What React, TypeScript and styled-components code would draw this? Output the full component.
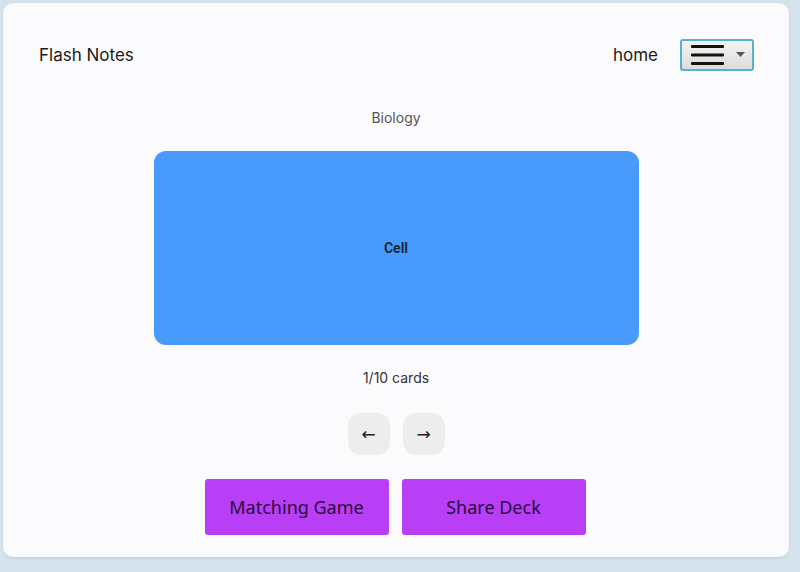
import React, { useState } from "react";
import styled, { createGlobalStyle } from "styled-components";

const GlobalStyle = createGlobalStyle`
  html, body {
    margin: 0;
    padding: 0;
    background: #d5e3ee;
  }
  body {
    font-family: Inter, "Liberation Sans", sans-serif;
  }
`;

const Page = styled.div`
  padding: 3px 11px 15px 3px;
  height: 572px;
  box-sizing: border-box;
`;

const Card = styled.main`
  width: 786px;
  height: 554px;
  box-sizing: border-box;
  background: #fbfafd;
  border-radius: 10px;
  box-shadow: 0 1px 3px rgba(60, 80, 110, 0.15);
  display: flex;
  flex-direction: column;
  align-items: center;
`;

const Header = styled.header`
  width: 100%;
  box-sizing: border-box;
  display: flex;
  align-items: center;
  justify-content: space-between;
  padding: 34px 35px 0 36px;
  height: 69px;
`;

const Brand = styled.div`
  font-size: 17px;
  color: #1a1a1a;
`;

const Nav = styled.nav`
  display: flex;
  align-items: center;
  gap: 22px;
`;

const NavLink = styled.a`
  font-size: 17px;
  color: #1a1a1a;
  text-decoration: none;
`;

const MenuSelect = styled.button`
  width: 74px;
  height: 32px;
  box-sizing: border-box;
  border: 2px solid #5aaed0;
  border-radius: 3px;
  background: linear-gradient(#f3f3f3, #dcdcdc);
  display: flex;
  align-items: center;
  justify-content: center;
  gap: 10px;
  padding: 0;
  cursor: pointer;
`;

const Subject = styled.div`
  margin-top: 37px;
  font-size: 14px;
  color: #555;
`;

const FlashCard = styled.div`
  margin-top: 25px;
  width: 485px;
  height: 194px;
  border-radius: 12px;
  background: #489bfc;
  display: flex;
  align-items: center;
  justify-content: center;
  font-family: Roboto, "Liberation Sans", sans-serif;
  font-weight: 700;
  font-size: 14px;
  color: #1b2a3c;
  cursor: pointer;
`;

const Counter = styled.div`
  margin-top: 24px;
  font-size: 14px;
  color: #333;
`;

const ArrowRow = styled.div`
  margin-top: 27px;
  display: flex;
  gap: 13px;
`;

const ArrowButton = styled.button`
  width: 42px;
  height: 42px;
  border: none;
  border-radius: 13px;
  background: #eeeded;
  font-size: 17px;
  color: #222;
  display: flex;
  align-items: center;
  justify-content: center;
  cursor: pointer;
  font-family: "DejaVu Sans", sans-serif;
`;

const ActionRow = styled.div`
  margin-top: 24px;
  display: flex;
  gap: 13px;
  margin-right: 2px;
`;

const ActionButton = styled.button`
  width: 184px;
  height: 56px;
  border: none;
  border-radius: 3px;
  background: #b83ff6;
  color: #2b0a3c;
  font-family: "Noto Sans", "Open Sans", sans-serif;
  font-size: 18px;
  cursor: pointer;
`;

const HamburgerIcon = () => (
  <svg width="36" height="22" viewBox="0 0 36 22">
    <rect x="1" y="1" width="33" height="3" rx="1" fill="#111" />
    <rect x="1" y="9.5" width="33" height="3" rx="1" fill="#111" />
    <rect x="1" y="18" width="33" height="3" rx="1" fill="#111" />
  </svg>
);

const Caret = () => (
  <svg width="9" height="5" viewBox="0 0 9 5">
    <path d="M0 0 L9 0 L4.5 5 Z" fill="#555" />
  </svg>
);

const cards = ["Cell", "Nucleus", "Mitochondria", "Ribosome", "Membrane", "Cytoplasm", "Chloroplast", "Enzyme", "DNA", "Protein"];

const App: React.FC = () => {
  const [index, setIndex] = useState(0);

  return (
    <>
      <GlobalStyle />
      <Page>
        <Card>
          <Header>
            <Brand>Flash Notes</Brand>
            <Nav>
              <NavLink href="#">home</NavLink>
              <MenuSelect aria-label="menu">
                <HamburgerIcon />
                <Caret />
              </MenuSelect>
            </Nav>
          </Header>
          <Subject>Biology</Subject>
          <FlashCard>{cards[index]}</FlashCard>
          <Counter>
            {index + 1}/{cards.length} cards
          </Counter>
          <ArrowRow>
            <ArrowButton onClick={() => setIndex((i) => Math.max(0, i - 1))}>←</ArrowButton>
            <ArrowButton onClick={() => setIndex((i) => Math.min(cards.length - 1, i + 1))}>→</ArrowButton>
          </ArrowRow>
          <ActionRow>
            <ActionButton>Matching Game</ActionButton>
            <ActionButton>Share Deck</ActionButton>
          </ActionRow>
        </Card>
      </Page>
    </>
  );
};

export default App;
